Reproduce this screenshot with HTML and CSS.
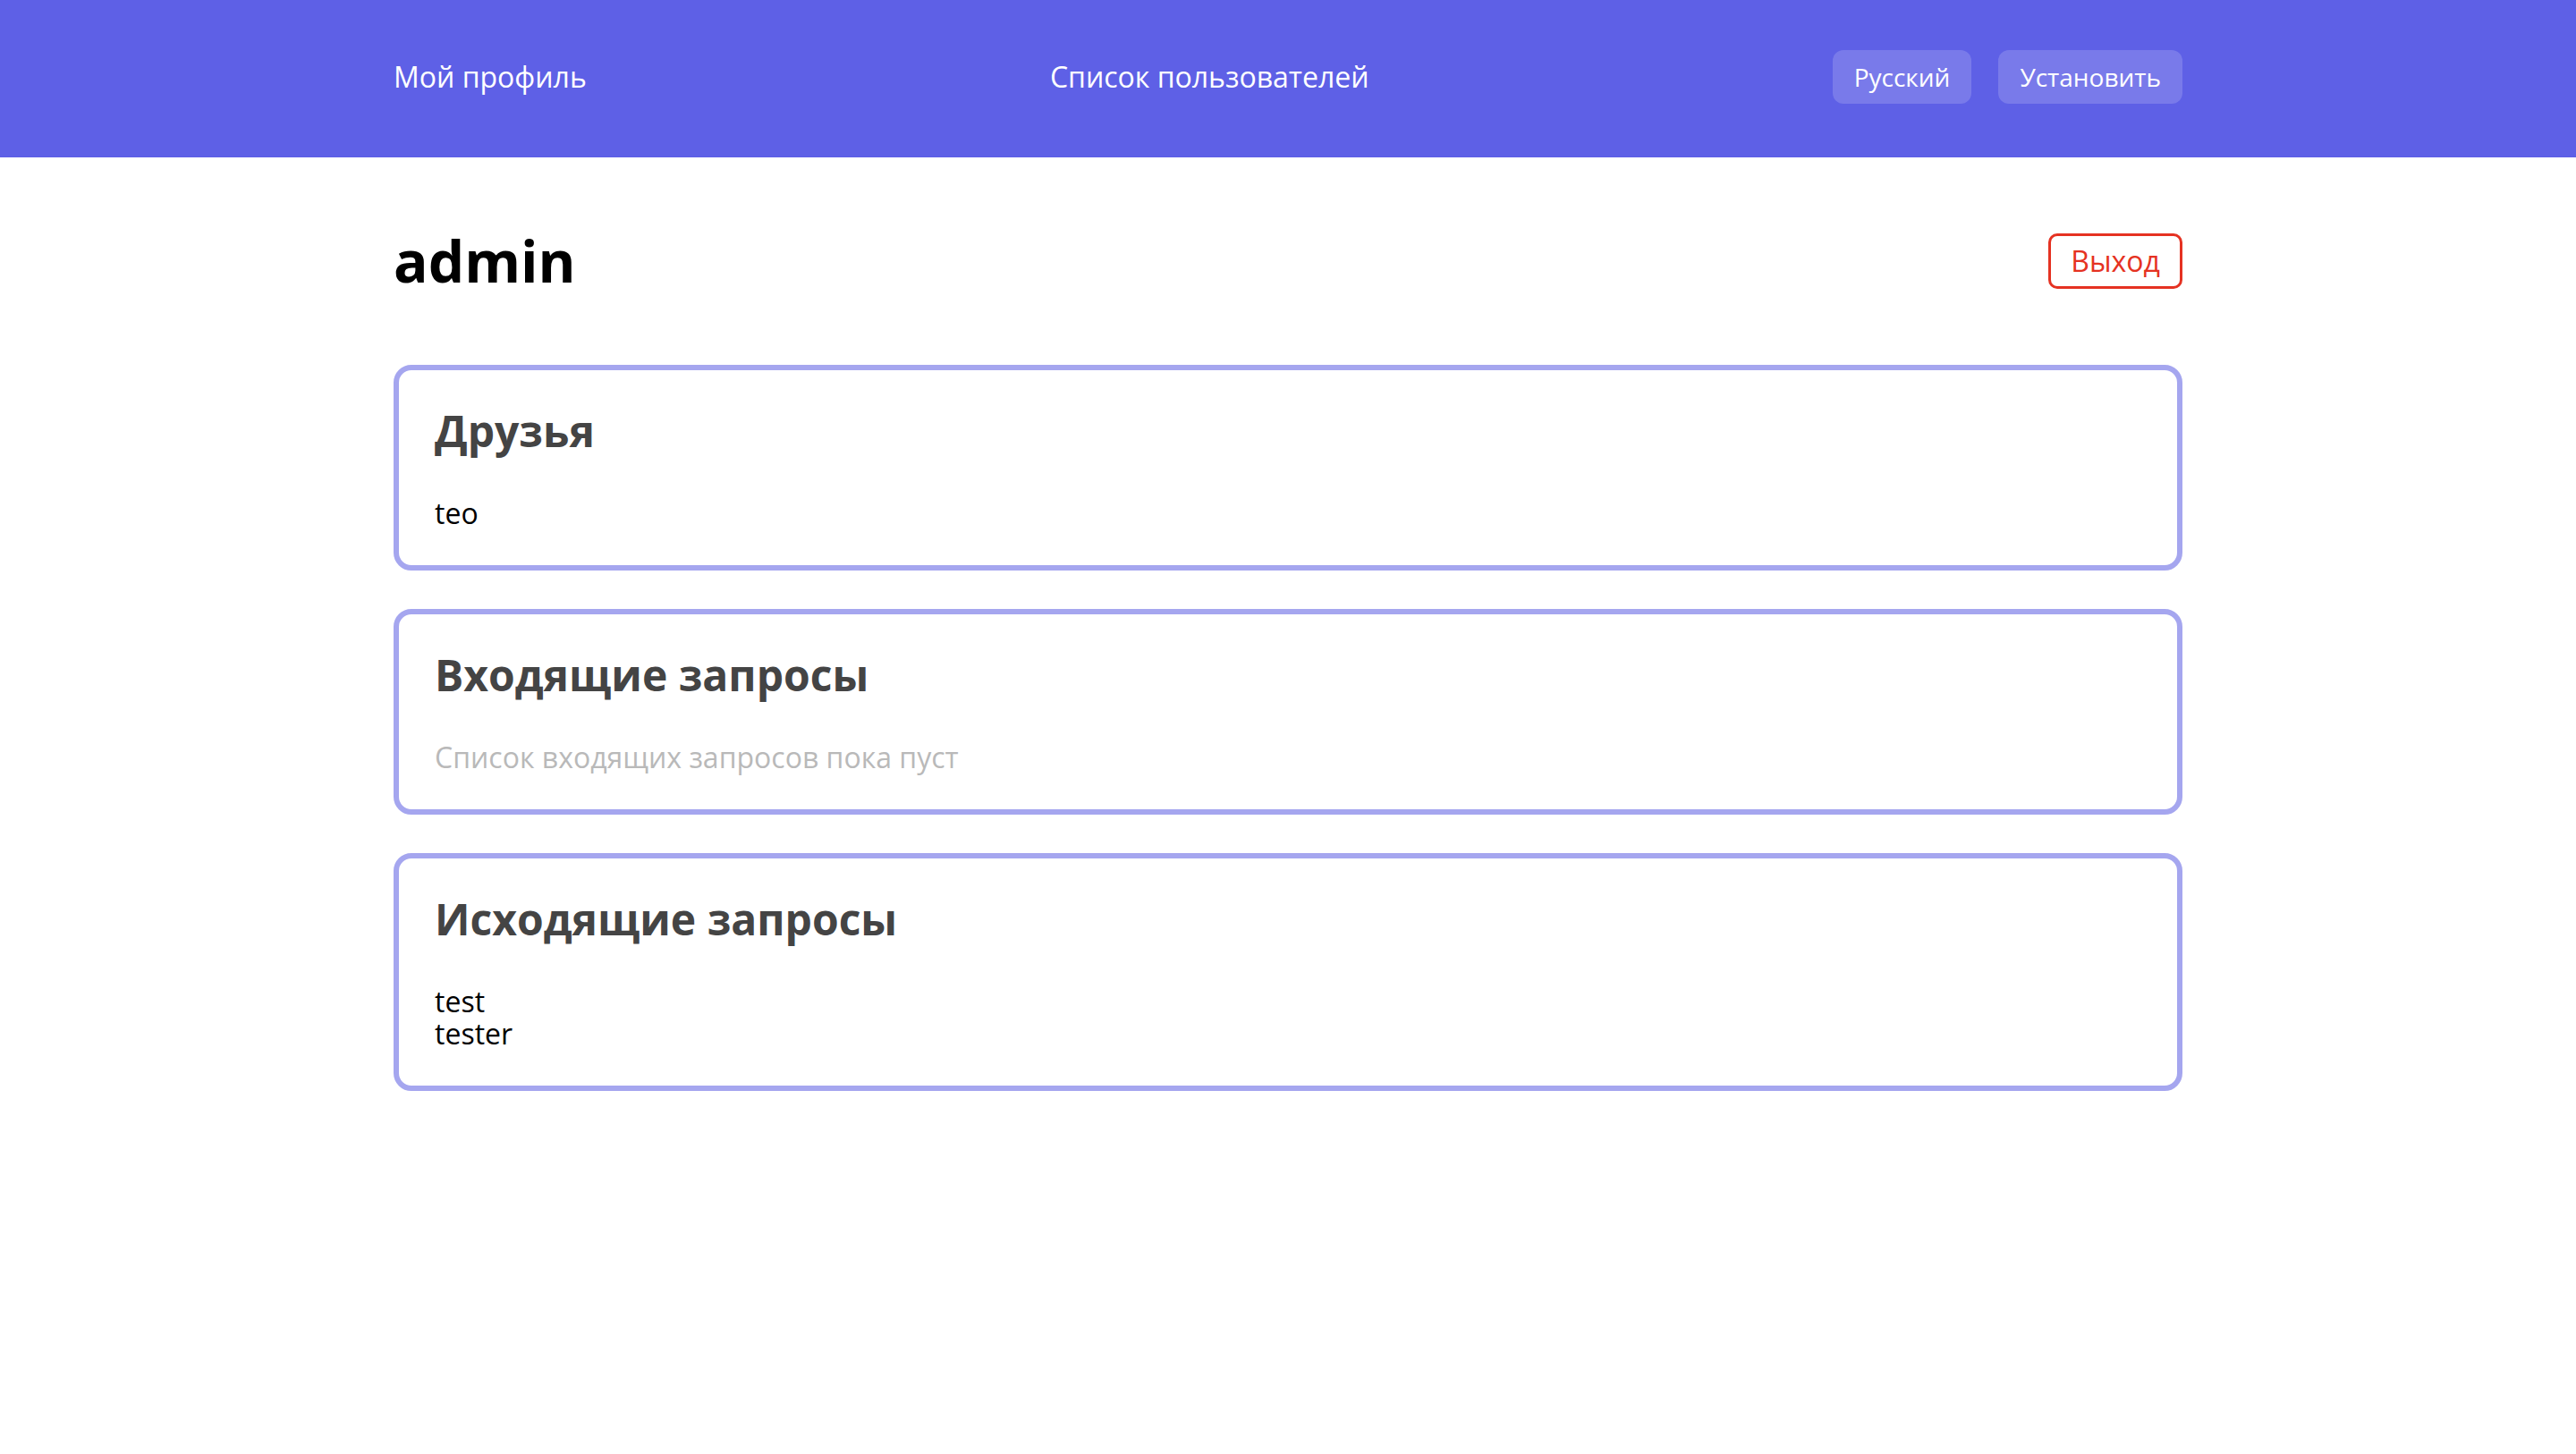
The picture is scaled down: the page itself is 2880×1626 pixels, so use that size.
FILE: index.html
```html
<!DOCTYPE html>
<html lang="ru">
<head>
<meta charset="utf-8">
<title>admin</title>
<link rel="stylesheet" href="styles.css">
</head>
<body>
<header class="topbar">
  <nav class="topbar-inner">
    <a class="nav-link" href="#">Мой профиль</a>
    <a class="nav-link" href="#">Список пользователей</a>
    <div class="nav-actions">
      <button class="nav-btn">Русский</button>
      <button class="nav-btn">Установить</button>
    </div>
  </nav>
</header>
<main class="page">
  <div class="title-row">
    <h1 class="username">admin</h1>
    <button class="logout-btn">Выход</button>
  </div>
  <section class="card">
    <h2 class="card-title">Друзья</h2>
    <div class="card-list">
      <div class="item">teo</div>
    </div>
  </section>
  <section class="card">
    <h2 class="card-title">Входящие запросы</h2>
    <div class="card-list">
      <div class="item empty">Список входящих запросов пока пуст</div>
    </div>
  </section>
  <section class="card">
    <h2 class="card-title">Исходящие запросы</h2>
    <div class="card-list">
      <div class="item">test</div>
      <div class="item">tester</div>
    </div>
  </section>
</main>
</body>
</html>
```
FILE: styles.css
```css
* { box-sizing: border-box; }
body {
  margin: 0;
  font-family: "Open Sans", "Noto Sans", sans-serif;
  background: #ffffff;
  color: #000;
}
.topbar {
  background: #5e60e6;
  height: 176px;
  padding-bottom: 4px;
  display: flex;
  align-items: center;
}
.topbar-inner {
  width: 2000px;
  margin: 0 auto;
  display: flex;
  align-items: center;
  justify-content: space-between;
}
.nav-link {
  color: #fff;
  text-decoration: none;
  font-size: 32px;
  line-height: 44px;
}
.nav-actions {
  display: flex;
  gap: 30px;
}
.nav-btn {
  font-family: inherit;
  font-size: 28px;
  line-height: 36px;
  color: #fff;
  background: rgba(255,255,255,0.17);
  border: none;
  border-radius: 12px;
  padding: 12px 24px;
}
.page {
  width: 2000px;
  margin: 0 auto;
  padding-top: 72px;
  display: flex;
  flex-direction: column;
  gap: 43px;
}
.title-row {
  display: flex;
  justify-content: space-between;
  align-items: center;
  margin-bottom: 30px;
}
.username {
  margin: 0;
  font-size: 64px;
  font-weight: 700;
  line-height: 87px;
}
.logout-btn {
  font-family: inherit;
  font-size: 32px;
  line-height: 36px;
  color: #e53222;
  background: #fff;
  border: 3px solid #e53222;
  border-radius: 10px;
  padding: 10px 22px;
}
.card {
  border: 6px solid #a5a6ef;
  border-radius: 20px;
  padding: 40px;
}
.card-title {
  margin: 0 0 46px;
  font-size: 48px;
  font-weight: 700;
  line-height: 56px;
  color: #444;
}
.item {
  font-size: 32px;
  line-height: 36px;
}
.item.empty {
  color: #b9b9b9;
}
```
